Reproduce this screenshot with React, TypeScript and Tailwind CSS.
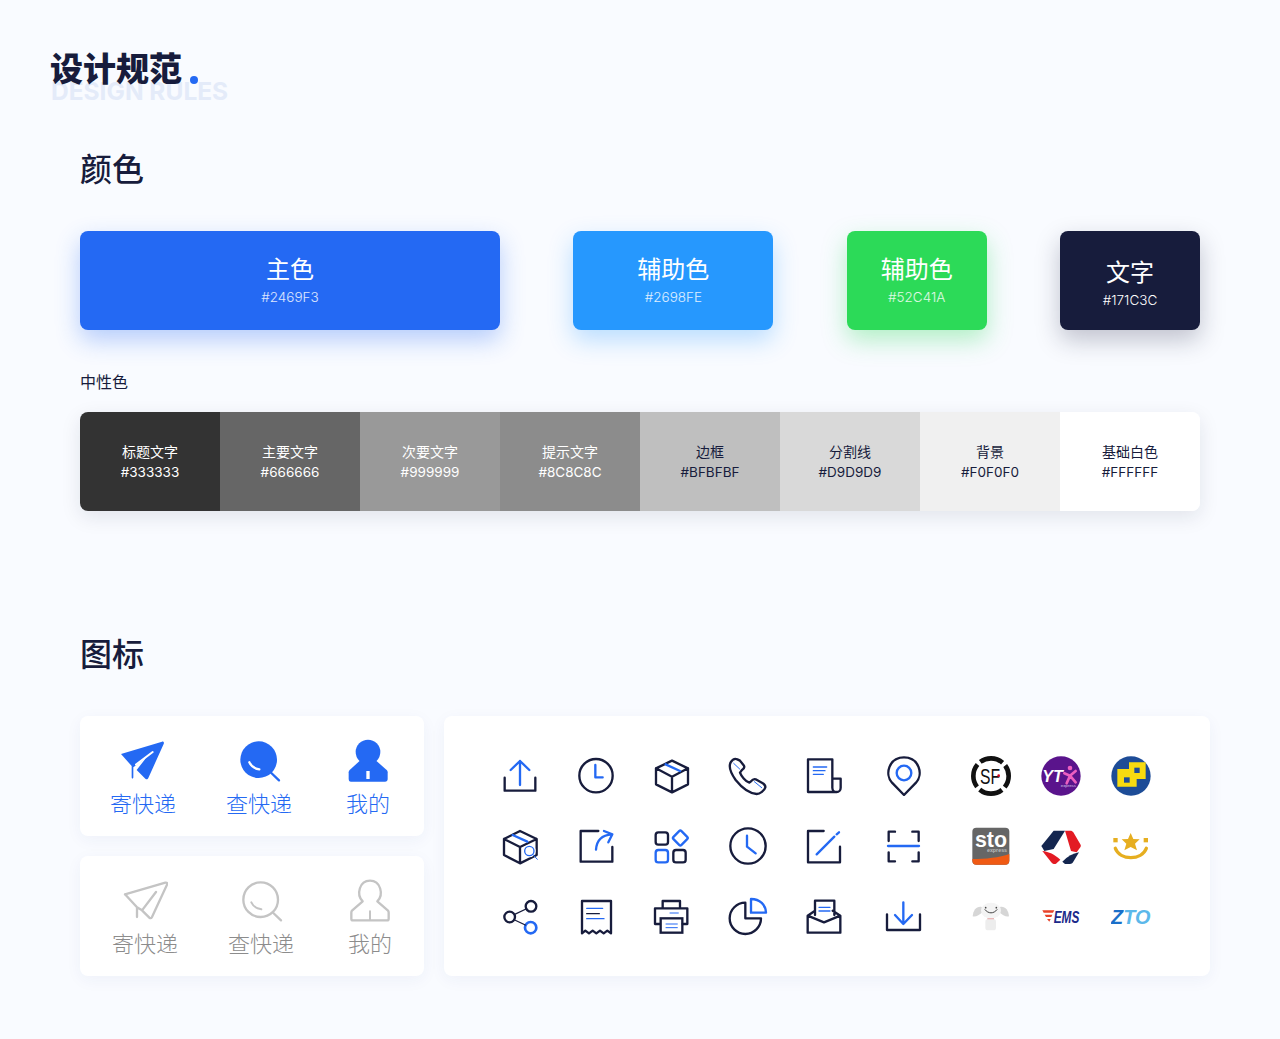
const DARK = "#171C3C";
const BLUE = "#2469F3";

const SWATCHES = [
  { name: "主色", hex: "#2469F3", cls: "w-[420px] bg-[#2469F3] pb-[2px] shadow-[0_10px_24px_rgba(36,105,243,0.32)] text-white/85" },
  { name: "辅助色", hex: "#2698FE", cls: "w-[200px] bg-[#2698FE] pb-[2px] shadow-[0_10px_24px_rgba(38,152,254,0.3)] text-white/85" },
  { name: "辅助色", hex: "#52C41A", cls: "w-[140px] bg-[#2CDA58] pb-[2px] shadow-[0_10px_24px_rgba(44,218,88,0.35)] text-white/85" },
  { name: "文字", hex: "#171C3C", cls: "w-[140px] bg-[#171C3C] pt-[5px] shadow-[0_10px_24px_rgba(23,28,60,0.25)] text-white" },
];

const NEUTRALS = [
  { name: "标题文字", hex: "#333333", cls: "bg-[#333333] text-white" },
  { name: "主要文字", hex: "#666666", cls: "bg-[#666666] text-white" },
  { name: "次要文字", hex: "#999999", cls: "bg-[#999999] text-white" },
  { name: "提示文字", hex: "#8C8C8C", cls: "bg-[#8C8C8C] text-white" },
  { name: "边框", hex: "#BFBFBF", cls: "bg-[#BFBFBF] text-[#171C3C]" },
  { name: "分割线", hex: "#D9D9D9", cls: "bg-[#D9D9D9] text-[#171C3C]" },
  { name: "背景", hex: "#F0F0F0", cls: "bg-[#F0F0F0] text-[#171C3C]" },
  { name: "基础白色", hex: "#FFFFFF", cls: "bg-white text-[#171C3C]" },
];

function Line({ d, c = DARK, w = 7 }: { d: string; c?: string; w?: number }) {
  return <path d={d} fill="none" stroke={c} strokeWidth={w} strokeLinecap="round" strokeLinejoin="round" />;
}

function Ring({ x, y, r, c = DARK, w = 7 }: { x: number; y: number; r: number; c?: string; w?: number }) {
  return <circle cx={x} cy={y} r={r} fill="none" stroke={c} strokeWidth={w} />;
}

// the glyphs are written in the coordinates of a 3x crop, viewBox picks the cell
function Glyph({ box, children }: { box: string; children: React.ReactNode }) {
  return (
    <svg viewBox={box} className="h-10 w-10">
      {children}
    </svg>
  );
}

const ICONS = [
  <Glyph box="30 33 120 120" key="upload">
    <Line d="M44 98V137H136V98" />
    <Line d="M90 120V48M62 75L90 48L118 75" c={BLUE} />
  </Glyph>,
  <Glyph box="258 33 120 120" key="time">
    <Ring x={318} y={92} r={50} />
    <Line d="M316 60V97H338" c={BLUE} />
  </Glyph>,
  <Glyph box="486 33 120 120" key="box">
    <Line d="M546 47L594 70V118L546 142L498 118V70ZM498 70L546 95L594 70M546 95V142" />
    <Line d="M527 58L570 78" c={BLUE} />
  </Glyph>,
  <Glyph box="39 33 120 120" key="phone">
    <Line d="M67 43C60 40 52 44 47 52C40 65 48 85 62 105C78 125 102 145 125 147C135 147 148 137 151 127C152 121 147 117 142 114L122 103C116 101 112 104 108 109L103 113C92 110 78 92 75 83L80 76C86 72 90 68 87 62L75 47Z" />
    <Line d="M56 55L74 72M118 110L140 128" c={BLUE} w={3} />
  </Glyph>,
  <Glyph box="267 33 120 120" key="doc">
    <Line d="M352 100V43H279V141H365C372 141 377 135 377 128V101H352V128C352 136 358 141 365 141" />
    <Line d="M295 66H335M295 77H330M295 88H325" c={BLUE} w={4} />
  </Glyph>,
  <Glyph box="507 33 120 120" key="pin">
    <Line d="M567 150L531 113C508 88 522 37 567 37C612 37 626 88 603 113Z" />
    <Ring x={567} y={84} r={22} c={BLUE} />
  </Glyph>,
  <Glyph box="30 243 120 120" key="box-search">
    <Line d="M90 258L140 282V330L90 355L42 330V282ZM42 282L90 306L140 282M90 306V355" />
    <Line d="M68 270L112 290" c={BLUE} />
    <circle cx={118} cy={318} r={19} fill="#fff" />
    <Ring x={118} y={318} r={14} c={BLUE} w={4} />
    <Line d="M128 328L142 343" c={BLUE} w={3} />
  </Glyph>,
  <Glyph box="258 243 120 120" key="share-out">
    <Line d="M325 258H272V350H367V306" />
    <Line d="M318 314C320 285 335 270 365 268M342 258L367 268L355 292" c={BLUE} />
  </Glyph>,
  <Glyph box="486 243 120 120" key="apps">
    <rect x={497} y={262} width={37} height={37} rx={8} fill="none" stroke={DARK} strokeWidth={7} />
    <rect x={554} y={262} width={34} height={34} rx={5} fill="none" stroke={BLUE} strokeWidth={7} transform="rotate(45 571 279)" />
    <rect x={497} y={315} width={37} height={37} rx={8} fill="none" stroke={BLUE} strokeWidth={7} />
    <rect x={550} y={315} width={37} height={37} rx={8} fill="none" stroke={DARK} strokeWidth={7} />
  </Glyph>,
  <Glyph box="39 243 120 120" key="clock">
    <Ring x={99} y={303} r={53} />
    <Line d="M96 272V305L122 325" c={BLUE} />
  </Glyph>,
  <Glyph box="267 243 120 120" key="edit">
    <Line d="M326 258H279V352H375V305" />
    <Line d="M305 328L358 275M365 268L372 262" c={BLUE} />
  </Glyph>,
  <Glyph box="507 243 120 120" key="scan">
    <Line d="M521 288V260H540M592 260H611V288M521 322V349H540M592 349H611V322" />
    <Line d="M519 303H612" c={BLUE} />
  </Glyph>,
  <Glyph box="30 453 120 120" key="share">
    <Ring x={59} y={516} r={16} />
    <Ring x={123} y={484} r={16} />
    <Ring x={122} y={548} r={17} c={BLUE} w={8} />
    <Line d="M74 508L108 492M74 525L106 540" w={4} />
  </Glyph>,
  <Glyph box="258 453 120 120" key="receipt">
    <Line d="M276 565V468H363V565L352 557L341 565L330 557L319 565L308 557L297 565L286 557Z" />
    <Line d="M290 490H338M290 521H342" c={BLUE} w={4} />
    <Line d="M290 506H328" w={4} />
  </Glyph>,
  <Glyph box="486 453 120 120" key="print">
    <Line d="M518 490V468H570V490M510 537H495V490H592V537H578" />
    <rect x={512} y={520} width={65} height={43} fill="none" stroke={DARK} strokeWidth={7} />
    <Line d="M528 537H562M528 548H562M540 504H565" c={BLUE} w={3} />
  </Glyph>,
  <Glyph box="39 453 120 120" key="pie">
    <Line d="M91 473A47 47 0 1 0 138 520H91Z" />
    <Line d="M108 462C135 462 152 480 153 503H108Z" c={BLUE} />
  </Glyph>,
  <Glyph box="267 453 120 120" key="mail">
    <Line d="M300 497L278 512V563H376V512L353 497M278 512L327 532L376 512M300 510V467H358V510" />
    <Line d="M312 487H345M312 498H345" c={BLUE} w={4} />
  </Glyph>,
  <Glyph box="507 453 120 120" key="download">
    <Line d="M516 508V555H615V508" />
    <Line d="M565 472V535M540 510L565 537L591 510" c={BLUE} />
  </Glyph>,
];

const LOGOS = [
  <Glyph box="48 33 120 120" key="sf">
    <circle cx={108} cy={93} r={53} fill="none" stroke="#111" strokeWidth={14} strokeDasharray="72 11.3" strokeDashoffset={36} />
    <text x={105} y={116} textAnchor="middle" fontSize={66} fontFamily="Liberation Sans" fill="#111" textLength={60} lengthAdjust="spacingAndGlyphs">SF</text>
    <circle cx={131} cy={92} r={4} fill="#D0021B" />
  </Glyph>,
  <Glyph box="258 33 120 120" key="yto">
    <circle cx={318} cy={93} r={59} fill="#5A148C" />
    <text x={262} y={112} fontSize={50} fontWeight={700} fontStyle="italic" fontFamily="Liberation Sans" fill="#fff" textLength={62} lengthAdjust="spacingAndGlyphs">YT</text>
    <circle cx={345} cy={69} r={7} fill="#EC5FC0" />
    <Line d="M328 85L345 92L362 78M345 92L335 115M345 92L362 112" c="#EC5FC0" w={8} />
    <text x={340} y={126} textAnchor="middle" fontSize={13} fontFamily="Liberation Sans" fill="#D7C2E8">express</text>
  </Glyph>,
  <Glyph box="468 33 120 120" key="yunda">
    <circle cx={528} cy={93} r={59} fill="#1D4C97" />
    <path d="M487 72H522V52H572V102H545V125H487Z" fill="#F7DB10" />
    <rect x={538} y={68} width={16} height={16} fill="#1D4C97" />
    <rect x={507} y={97} width={17} height={16} fill="#1D4C97" />
  </Glyph>,
  <Glyph box="48 243 120 120" key="sto">
    <rect x={52} y={248} width={111} height={111} rx={12} fill="#666" />
    <path d="M52 342C90 342 135 338 163 327V347C163 354 158 359 151 359H64C57 359 52 354 52 347Z" fill="#F05A14" />
    <text x={108} y={306} textAnchor="middle" fontSize={64} fontWeight={700} fontFamily="Liberation Sans" fill="#fff">sto</text>
    <text x={126} y={322} textAnchor="middle" fontSize={16} fontWeight={700} fontFamily="Liberation Sans" fill="#bbb">express</text>
  </Glyph>,
  <Glyph box="258 243 120 120" key="deppon">
    <path d="M296 257H330L296 312L268 318L259 303Z" fill="#14264F" />
    <path d="M330 257H346C350 257 353 259 355 262L376 298C378 301 378 304 376 307L365 322L348 318Z" fill="#E31B23" />
    <path d="M262 318C282 320 298 328 316 344L303 356C298 358 293 356 290 353Z" fill="#E31B23" />
    <path d="M372 322C354 325 338 334 322 350L330 357H345C349 357 352 355 354 352Z" fill="#14264F" />
  </Glyph>,
  <Glyph box="468 243 120 120" key="star">
    <rect x={475} y={279} width={13} height={13} fill="#E6AE20" />
    <rect x={566} y={279} width={13} height={13} fill="#E6AE20" />
    <path d="M527 264L535 282L554 283L540 296L546 316L527 306L508 316L514 296L500 283L519 282Z" fill="#E6AE20" />
    <Line d="M481 310C495 347 560 347 574 310" c="#E6AE20" w={10} />
  </Glyph>,
  <Glyph box="48 453 120 120" key="joy">
    <path d="M80 486C65 483 55 495 53 514C62 517 72 510 84 500Z" fill="#D6D6D6" />
    <path d="M135 486C150 483 160 495 162 514C153 517 143 510 131 500Z" fill="#D6D6D6" />
    <ellipse cx={108} cy={497} rx={30} ry={24} fill="#F4F4F4" />
    <circle cx={92} cy={488} r={2.5} fill="#444" />
    <circle cx={124} cy={488} r={2.5} fill="#444" />
    <Line d="M90 494C100 507 116 507 126 494" c="#444" w={3} />
    <rect x={91} y={522} width={32} height={34} rx={8} fill="#EDEDED" />
    <rect x={97} y={519} width={20} height={4} fill="#E9B9B9" />
  </Glyph>,
  <Glyph box="258 453 120 120" key="ems">
    <path d="M262 496H298L294 503H266ZM269 509H292L289 516H273ZM276 522H287L283 530Z" fill="#E8432A" />
    <text x={296} y={533} fontSize={48} fontWeight={700} fontStyle="italic" fontFamily="Liberation Sans" fill="#1B2A8A" textLength={77} lengthAdjust="spacingAndGlyphs">EMS</text>
  </Glyph>,
  <Glyph box="468 453 120 120" key="zto">
    <text x={468} y={537} fontSize={62} fontWeight={700} fontStyle="italic" fontFamily="Liberation Sans" fill="#1A6FC9" textLength={118} lengthAdjust="spacingAndGlyphs">
      Z<tspan fill="#5CB8EA">TO</tspan>
    </text>
  </Glyph>,
];

const TABS = [
  { label: "寄快递", solid: "M123 118L246 81C251 80 253 84 251 88L205 190C203 195 199 195 196 192L170 166L198 130L160 158V188C160 193 155 193 155 188V154Z", line: "M129 119L250 84C255 83 257 86 255 90L210 187C208 191 205 191 202 189L180 167L222 112M180 167L165 158M165 158L129 119M165 158V187" },
  { label: "查快递", solid: "", line: "" },
  { label: "我的", solid: "", line: "" },
];

function TabIcon({ i, active }: { i: number; active: boolean }) {
  const c = active ? BLUE : "#C4C4C4";
  if (i === 0)
    return (
      <svg viewBox="120 70 138 138" className="h-[46px] w-[46px]">
        {active ? (
          <>
            <path d={TABS[0].solid} fill={c} />
            <Line d="M168 150L218 112" c="#fff" w={6} />
          </>
        ) : (
          <Line d={TABS[0].line} c={c} w={7} />
        )}
      </svg>
    );
  if (i === 1)
    return (
      <svg viewBox="464 70 138 138" className="h-[46px] w-[46px]">
        {active ? <circle cx={532} cy={135} r={55} fill={c} /> : <Ring x={532} y={135} r={52} c={c} w={7} />}
        <Line d="M570 175L593 197" c={c} w={7} />
        <Line d="M504 143C510 156 520 162 534 164" c={active ? "#fff" : c} w={active ? 7 : 6} />
      </svg>
    );
  return (
    <svg viewBox="793 70 138 138" className="h-[46px] w-[46px]">
      {active ? (
        <>
          <circle cx={862} cy={112} r={37} fill={c} />
          <path d="M840 136H884L918 166C920 168 921 170 921 173V193C921 198 918 201 913 201H811C806 201 804 198 804 193V173C804 170 805 168 807 166Z" fill={c} />
          <rect x={857} y={169} width={10} height={24} fill="#fff" />
        </>
      ) : (
        <>
          <Line d="M840 140C820 120 830 78 862 78C894 78 904 120 884 140L916 168C918 170 918 172 918 174V192C918 195 916 197 913 197H811C808 197 806 195 806 192V174C806 172 806 170 808 168Z" c={c} w={7} />
          <Line d="M862 170V196" c={c} w={6} />
        </>
      )}
    </svg>
  );
}

function TabCard({ active }: { active: boolean }) {
  return (
    <div className={`flex h-[120px] w-[344px] gap-[50px] rounded-lg bg-white pt-[22px] shadow-[0_4px_16px_rgba(36,60,140,0.05)] ${active ? "pl-[30px] text-[#2469F3]" : "pl-[32px] text-[#8C8C8C]"}`}>
      {TABS.map((t, i) => (
        <div key={t.label} className={`flex flex-col items-center ${i === 2 ? "ml-[3px]" : ""}`}>
          <TabIcon i={i} active={active} />
          <span className="text-[22px] leading-[36px] font-light">{t.label}</span>
        </div>
      ))}
    </div>
  );
}

function Heading({ children }: { children: React.ReactNode }) {
  return <h2 className="text-[32px] leading-[40px] font-medium text-[#171C3C]">{children}</h2>;
}

export default function App() {
  return (
    <div className="h-[1039px] w-[1280px] overflow-hidden bg-[#F9FBFF] pl-[80px] font-['Noto_Sans_CJK_SC','Noto_Sans',sans-serif]">
      {/* title, english line sits under the chinese */}
      <div className="relative -ml-[30px] h-[147px] pt-[45px]">
        <span className="absolute top-[73px] left-[1px] font-['Inter',sans-serif] text-[24.5px] leading-[36px] font-bold text-[#E4EBF9]">
          DESIGN RULES
        </span>
        <h1 className="relative flex items-start text-[33px] leading-[44px] font-black text-[#171C3C]">
          设计规范
          <span className="mt-[31px] ml-[8px] h-2 w-2 rounded-full bg-[#2469F3]" />
        </h1>
      </div>

      <Heading>颜色</Heading>

      <div className="mt-[44px] flex w-[1120px] justify-between">
        {SWATCHES.map((s) => (
          <div key={s.hex} className={`flex h-[99px] flex-col items-center justify-center rounded-lg ${s.cls}`}>
            <div className="text-[24px] leading-[32px] text-white">{s.name}</div>
            <div className="mt-[2px] font-['Inter',sans-serif] text-[13.5px] leading-[22px] font-light">{s.hex}</div>
          </div>
        ))}
      </div>

      <div className="mt-[40px] text-[16px] leading-[22px] text-[#171C3C]">中性色</div>

      <div className="mt-[20px] flex h-[99px] w-[1120px] overflow-hidden rounded-lg shadow-[0_6px_20px_rgba(23,28,60,0.1)]">
        {NEUTRALS.map((n) => (
          <div key={n.hex} className={`flex w-[140px] flex-col items-center justify-center pb-px ${n.cls}`}>
            <div className="text-[14px] leading-[20px]">{n.name}</div>
            <div className="mt-px font-['Inter',sans-serif] text-[13.5px] leading-[20px]">{n.hex}</div>
          </div>
        ))}
      </div>

      <div className="mt-[121px]">
        <Heading>图标</Heading>
      </div>

      <div className="mt-[44px] flex gap-5">
        <div className="flex flex-col gap-5">
          <TabCard active />
          <TabCard active={false} />
        </div>
        <div className="flex h-[260px] w-[766px] rounded-lg bg-white pt-[40px] pl-[56px] shadow-[0_4px_16px_rgba(36,60,140,0.05)]">
          <div className="grid grid-cols-[76px_76px_76px_76px_80px_40px] content-start gap-y-[30px]">{ICONS}</div>
          <div className="ml-[47px] grid grid-cols-[70px_70px_40px] content-start gap-y-[30px]">{LOGOS}</div>
        </div>
      </div>
    </div>
  );
}
